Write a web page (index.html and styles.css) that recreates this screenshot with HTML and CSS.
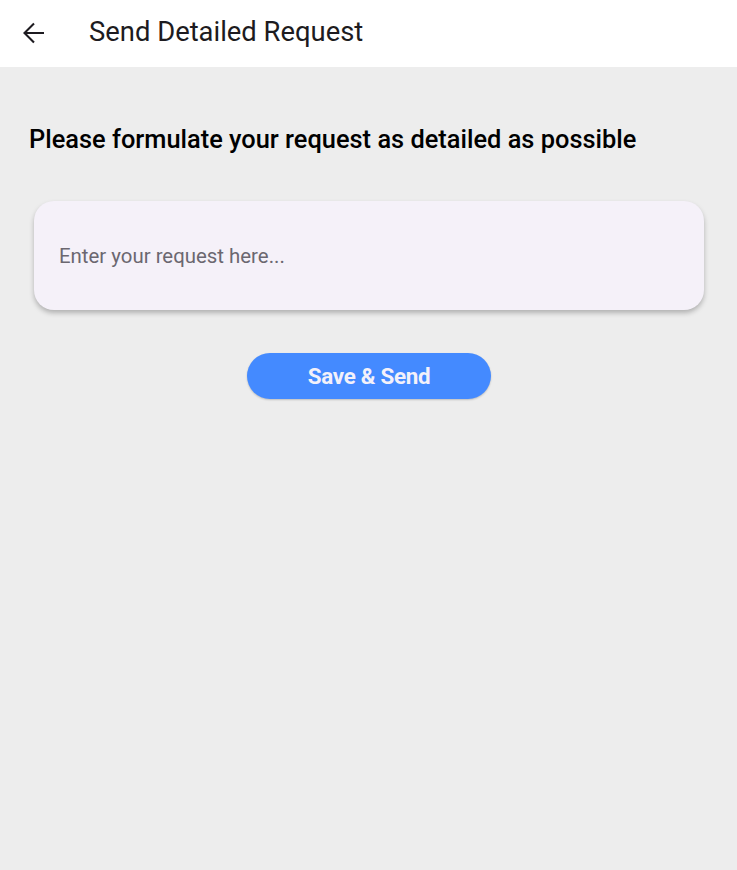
FILE: index.html
```html
<!DOCTYPE html>
<html>
<head>
<meta charset="utf-8">
<link rel="stylesheet" href="styles.css">
</head>
<body>
<header class="appbar">
  <button class="back" aria-label="Back">
    <svg width="24" height="24" viewBox="0 0 24 24"><path d="M22 12H3M12 2.5L2.5 12 12 21.5" fill="none" stroke="#1d1b20" stroke-width="2.1"/></svg>
  </button>
  <h1 class="title">Send Detailed Request</h1>
</header>
<main class="content">
  <h2 class="heading">Please formulate your request as detailed as possible</h2>
  <div class="card">
    <div class="placeholder">Enter your request here...</div>
  </div>
  <div class="actions">
    <button class="send">Save &amp; Send</button>
  </div>
</main>
</body>
</html>
```
FILE: styles.css
```css
html, body {
  margin: 0;
  padding: 0;
  height: 100%;
}
body {
  background: #ededed;
  font-family: Roboto, "Noto Sans", sans-serif;
}
.appbar {
  height: 67px;
  background: #ffffff;
  display: flex;
  align-items: center;
  padding-left: 22px;
  box-sizing: border-box;
}
.back {
  border: none;
  background: none;
  padding: 0;
  width: 24px;
  height: 24px;
  display: flex;
  margin-top: -2px;
}
.title {
  margin: -4px 0 0 43px;
  font-size: 27.4px;
  font-weight: 400;
  color: #1d1b20;
}
.content {
  padding: 0 33px 0 34px;
}
.heading {
  margin: 0;
  padding-top: 56px;
  margin-left: -5px;
  font-size: 25.4px;
  font-weight: 500;
  color: #000;
  line-height: 32px;
}
.card {
  margin-top: 46px;
  height: 109px;
  background: #f5f1f9;
  border-radius: 20px;
  box-shadow: 0 3px 5px rgba(0,0,0,0.25);
  display: flex;
  align-items: center;
  padding-left: 25px;
}
.placeholder {
  font-size: 20.4px;
  color: #6b6770;
}
.actions {
  display: flex;
  justify-content: center;
  margin-top: 43px;
}
.send {
  width: 244px;
  height: 46px;
  border: none;
  border-radius: 23px;
  background: #448aff;
  color: #f3f1fa;
  font-family: Roboto, sans-serif;
  font-size: 22.4px;
  font-weight: 700;
  letter-spacing: -0.3px;
  box-shadow: 0 1px 2px rgba(0,0,0,0.2);
}
```
